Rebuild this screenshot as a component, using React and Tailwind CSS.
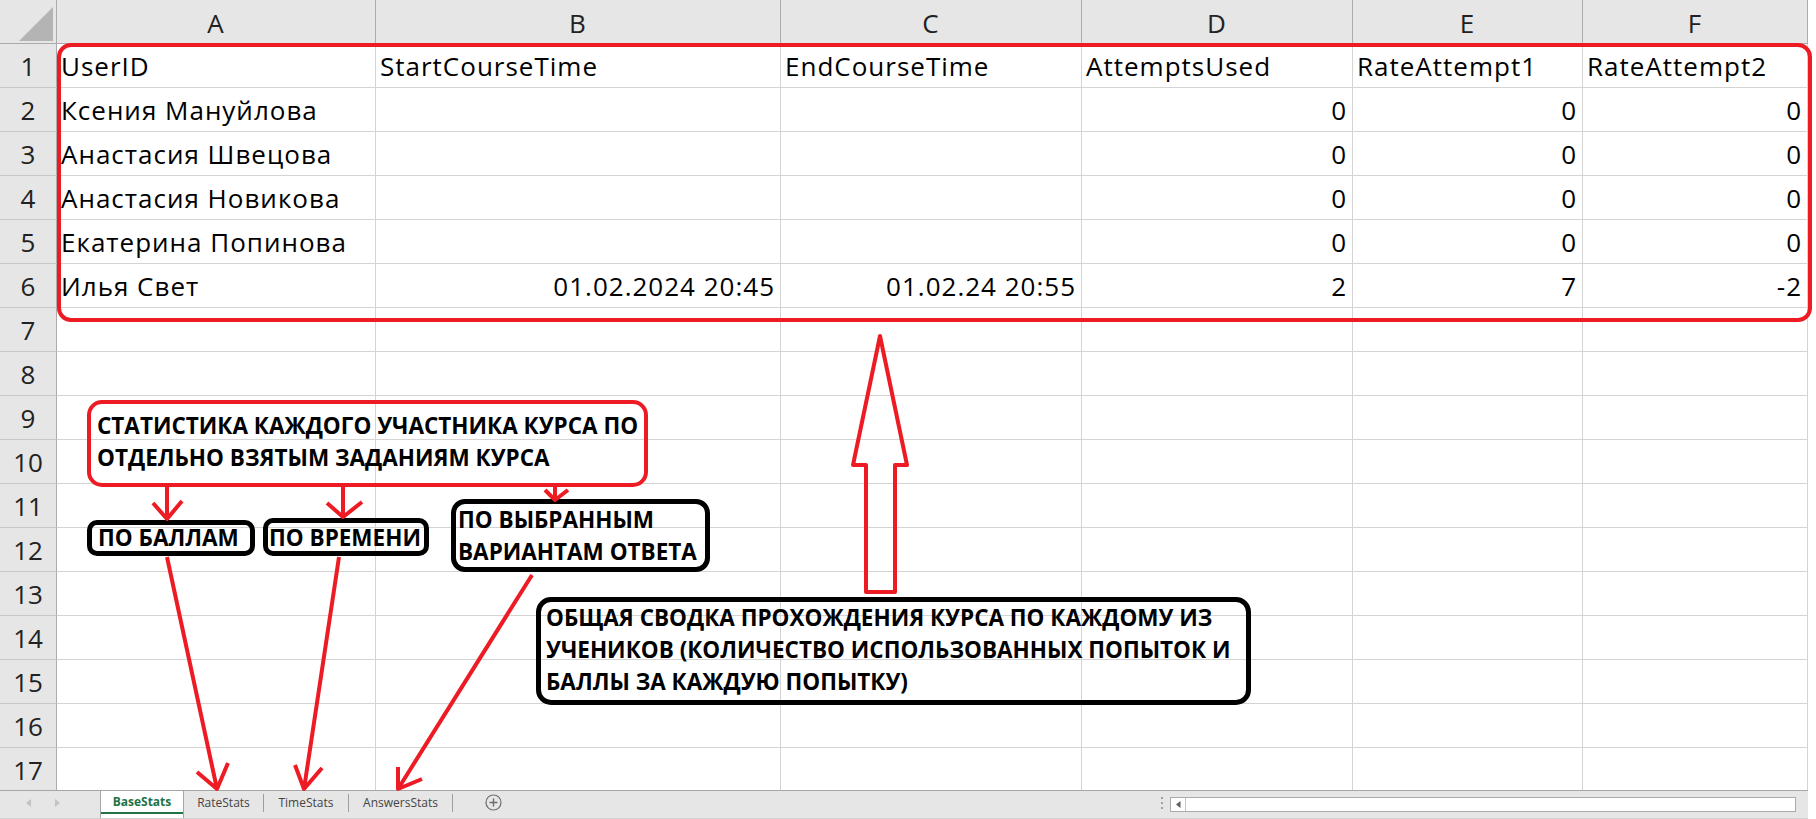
const COLS = ['A', 'B', 'C', 'D', 'E', 'F'];
const COL_W = ['w-[319px]', 'w-[405px]', 'w-[301px]', 'w-[271px]', 'w-[230px]', 'w-[225px]'];

// row data: text cells are left aligned, numbers and dates right aligned
const ROWS = [
  [['UserID'], ['StartCourseTime'], ['EndCourseTime'], ['AttemptsUsed'], ['RateAttempt1'], ['RateAttempt2']],
  [['Ксения Мануйлова'], [''], [''], ['0', 'r'], ['0', 'r'], ['0', 'r']],
  [['Анастасия Швецова'], [''], [''], ['0', 'r'], ['0', 'r'], ['0', 'r']],
  [['Анастасия Новикова'], [''], [''], ['0', 'r'], ['0', 'r'], ['0', 'r']],
  [['Екатерина Попинова'], [''], [''], ['0', 'r'], ['0', 'r'], ['0', 'r']],
  [['Илья Свет'], ['01.02.2024 20:45', 'r'], ['01.02.24 20:55', 'r'], ['2', 'r'], ['7', 'r'], ['-2', 'r']],
];

const TOTAL_ROWS = 17;

function Cell({ value, align, width }) {
  return (
    <div
      className={`${width} h-[44px] shrink-0 border-r border-b border-[#d4d4d4] px-[4px] pt-[1px] leading-[42px] whitespace-nowrap overflow-visible text-black ${
        align === 'r' ? 'text-right pr-[5px]' : 'text-left'
      }`}
    >
      {value}
    </div>
  );
}

function Grid() {
  return (
    <div className="h-[790px] overflow-hidden text-[26px] tracking-[1px]">
      {/* column headers */}
      <div className="flex h-[44px]">
        <div className="w-[57px] h-[44px] shrink-0 bg-[#e6e6e6] border-r border-b border-[#ababab] relative">
          <svg className="absolute left-0 top-0" width="56" height="43" viewBox="0 0 56 43">
            <polygon points="53,7 53,41 19,41" fill="#b4b4b4" />
          </svg>
        </div>
        {COLS.map((c, i) => (
          <div
            key={c}
            className={`${COL_W[i]} h-[44px] shrink-0 bg-[#e6e6e6] border-r border-b border-[#ababab] text-center leading-[42px] pt-[2px] text-[#222]`}
          >
            {c}
          </div>
        ))}
      </div>

      {Array.from({ length: TOTAL_ROWS }).map((_, r) => {
        const data = ROWS[r];
        return (
          <div key={r} className="flex h-[44px]">
            <div className="w-[57px] h-[44px] shrink-0 bg-[#e6e6e6] border-r border-[#ababab] border-b-[#c8c8c8] border-b text-center leading-[42px] pt-[1px] text-[#222] tracking-normal">
              {r + 1}
            </div>
            {COLS.map((c, i) => (
              <Cell
                key={c}
                width={COL_W[i]}
                value={data ? data[i][0] : ''}
                align={data ? data[i][1] : undefined}
              />
            ))}
          </div>
        );
      })}
    </div>
  );
}

function Tab({ label, active, width }) {
  if (active) {
    return (
      <div className={`${width} h-full shrink-0 bg-white border-x border-[#a6a6a6] flex flex-col`}>
        <div className="flex-1 flex items-center justify-center font-bold text-[#217346] text-[12px] pt-[1px]">
          {label}
        </div>
        <div className="h-[2px] bg-[#217346] mb-[4px]" />
      </div>
    );
  }
  return (
    <div className={`${width} h-full shrink-0 flex items-center`}>
      <div className="flex-1 text-center text-[12px] text-[#444] pb-[4px]">{label}</div>
      <div className="w-px h-[18px] bg-[#9e9e9e] mb-[4px]" />
    </div>
  );
}

function TabBar() {
  return (
    <div className="h-[29px] flex bg-[#e6e6e6] border-t border-[#a6a6a6] border-b border-b-[#d2d2d2]">
      {/* sheet navigation arrows */}
      <div className="w-[100px] shrink-0 flex items-center pb-[4px]">
        <svg className="ml-[26px]" width="6" height="8" viewBox="0 0 6 8">
          <polygon points="5,0 5,8 0,4" fill="#c3c3c3" />
        </svg>
        <svg className="ml-[23px]" width="6" height="8" viewBox="0 0 6 8">
          <polygon points="0,0 0,8 5,4" fill="#c3c3c3" />
        </svg>
      </div>
      <Tab label="BaseStats" active width="w-[84px]" />
      <Tab label="RateStats" width="w-[80px]" />
      <Tab label="TimeStats" width="w-[85px]" />
      <Tab label="AnswersStats" width="w-[104px]" />
      <div className="w-[80px] shrink-0 flex items-center justify-center pb-[4px]">
        <svg width="17" height="17" viewBox="0 0 17 17">
          <circle cx="8.5" cy="8.5" r="7.5" fill="none" stroke="#6e6e6e" strokeWidth="1.2" />
          <path d="M8.5 4.5v8M4.5 8.5h8" stroke="#6e6e6e" strokeWidth="1.4" />
        </svg>
      </div>
      <div className="flex-1" />
      {/* splitter dots */}
      <div className="w-[16px] shrink-0 flex flex-col items-center justify-center gap-[3px] pb-[4px]">
        <div className="w-[2px] h-[2px] bg-[#a0a0a0]" />
        <div className="w-[2px] h-[2px] bg-[#a0a0a0]" />
        <div className="w-[2px] h-[2px] bg-[#a0a0a0]" />
      </div>
      {/* horizontal scrollbar */}
      <div className="w-[626px] shrink-0 mt-[6px] h-[15px] bg-white border border-[#ababab] flex">
        <div className="w-[15px] h-full border-r border-[#c6c6c6] flex items-center justify-center">
          <svg width="5" height="7" viewBox="0 0 5 7">
            <polygon points="4.5,0 4.5,7 0,3.5" fill="#5f5f5f" />
          </svg>
        </div>
      </div>
      <div className="w-[12px] shrink-0" />
    </div>
  );
}

function Note({ className, children }) {
  return (
    <div
      className={`absolute font-bold text-black text-[22.5px] whitespace-nowrap ${className}`}
    >
      {children}
    </div>
  );
}

export default function App() {
  return (
    <div className="relative w-[1816px] h-[819px] overflow-hidden bg-white font-['Open_Sans',sans-serif]">
      <div className="w-[1808px] flex flex-col">
        <Grid />
        <TabBar />
      </div>

      {/* red frame around the table */}
      <div className="absolute left-[57px] top-[43px] w-[1755px] h-[279px] border-4 border-[#ed1c24] rounded-[14px]" />

      <Note className="left-[87px] top-[400px] w-[561px] h-[87px] border-4 border-[#ed1c24] rounded-[15px] pl-[6px] pt-[6px] leading-[32px]">
        СТАТИСТИКА КАЖДОГО УЧАСТНИКА КУРСА ПО
        <br />
        ОТДЕЛЬНО ВЗЯТЫМ ЗАДАНИЯМ КУРСА
      </Note>
      <Note className="left-[87px] top-[520px] w-[168px] h-[36px] border-[5px] border-black rounded-[10px] pl-[6px] leading-[26px]">
        ПО БАЛЛАМ
      </Note>
      <Note className="left-[263px] top-[518px] w-[166px] h-[38px] border-[5px] border-black rounded-[10px] pl-[1px] pt-[2px] leading-[26px]">
        ПО ВРЕМЕНИ
      </Note>
      <Note className="left-[451px] top-[499px] w-[259px] h-[73px] border-[5px] border-black rounded-[14px] pl-[2px] leading-[32px]">
        ПО ВЫБРАННЫМ
        <br />
        ВАРИАНТАМ ОТВЕТА
      </Note>
      <Note className="left-[536px] top-[597px] w-[715px] h-[108px] border-[5px] border-black rounded-[15px] pl-[5px] leading-[32px]">
        ОБЩАЯ СВОДКА ПРОХОЖДЕНИЯ КУРСА ПО КАЖДОМУ ИЗ
        <br />
        УЧЕНИКОВ (КОЛИЧЕСТВО ИСПОЛЬЗОВАННЫХ ПОПЫТОК И
        <br />
        БАЛЛЫ ЗА КАЖДУЮ ПОПЫТКУ)
      </Note>

      {/* hand drawn arrows */}
      <svg
        className="absolute left-0 top-0 pointer-events-none"
        width="1816"
        height="819"
        viewBox="0 0 1816 819"
        fill="none"
        stroke="#ed1c24"
        strokeWidth="4"
        strokeLinejoin="round"
      >
        <polygon points="880,336 907,465 895,465 895,592 866,592 866,465 853,465" />

        <path d="M167 487V519M153 503L167 519L182 501" />
        <path d="M343 487V517M327 503L343 517L362 502" />
        <path d="M555 485V500M545 490L555 500L568 490" />

        <path d="M167 557L217 789M197 772L217 789L228 763" />
        <path d="M339 557L304 789M295 765L304 789L322 768" />
        <path d="M532 575L398 789M398 767L398 789L422 779" />
      </svg>
    </div>
  );
}
